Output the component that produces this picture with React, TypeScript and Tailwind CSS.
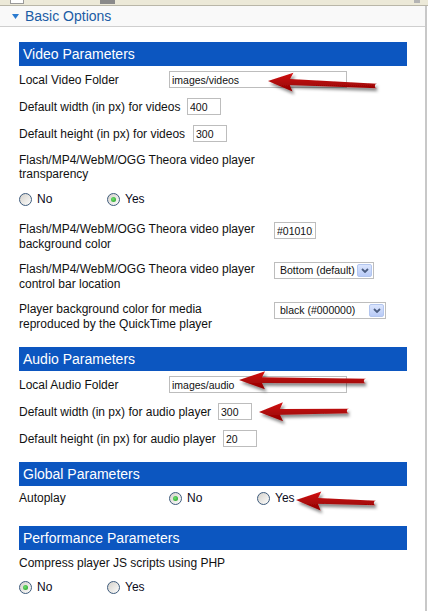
import React from "react";

const FONT = "font-['Liberation_Sans',Arial,sans-serif]";

function Bar({ children }: { children: React.ReactNode }) {
  return (
    <div className="h-[24px] w-[388px] bg-[#0c56c0] text-white text-[14px] leading-[24px] pl-[4px]">
      {children}
    </div>
  );
}

function TextBox({ value, w }: { value: string; w: string }) {
  return (
    <input
      readOnly
      value={value}
      className={`${w} h-[17px] border border-[#bdbdbd] bg-white text-[10.5px] leading-[15px] px-[2px] text-[#111] outline-none ${FONT}`}
    />
  );
}

function Radio({ checked }: { checked?: boolean }) {
  return (
    <span className="relative inline-block w-[13px] h-[13px] shrink-0 rounded-full border border-[#3e5b7c] bg-[linear-gradient(135deg,#d4d1cb,#fdfdfc)]">
      {checked && (
        <span className="absolute left-[3px] top-[3px] w-[5px] h-[5px] rounded-full bg-[radial-gradient(circle_at_40%_40%,#6fe06f,#1f9a1f)]" />
      )}
    </span>
  );
}

function RadioOpt({ label, checked }: { label: string; checked?: boolean }) {
  return (
    <span className="w-[88px] flex items-center gap-[5px]">
      <Radio checked={checked} />
      <span className="text-[12px] leading-[14px] text-[#0a0a1a]">{label}</span>
    </span>
  );
}

function Select({ value, w }: { value: string; w: string }) {
  return (
    <div
      className={`${w} h-[17px] flex items-center border border-[#bdbdbd] bg-white pl-[5px] pr-[1px] text-[10.5px] leading-[15px] text-[#111]`}
    >
      <span className="flex-1 whitespace-nowrap">{value}</span>
      <span className="w-[15px] h-[13px] shrink-0 rounded-[2px] border border-[#b3c6ef] bg-[linear-gradient(180deg,#dbe5fd,#b9cbf7)] flex items-center justify-center">
        <svg width="8" height="5" viewBox="0 0 8 5">
          <path d="M1 1 L4 4 L7 1" fill="none" stroke="#4b5d80" strokeWidth="1.8" />
        </svg>
      </span>
    </div>
  );
}

function arrowPath(tx: number, ty: number, ex: number, ey: number, hl: number, hh: number) {
  const L = Math.hypot(ex - tx, ey - ty);
  const dx = (ex - tx) / L;
  const dy = (ey - ty) / L;
  const nx = -dy;
  const ny = dx;
  const bx = tx + dx * hl;
  const by = ty + dy * hl;
  const s1 = 2.9;
  const s2 = 2.2;
  const p = (x: number, y: number) => `${x.toFixed(1)},${y.toFixed(1)}`;
  const c1 = p(bx + nx * hh + dx * 1, by + ny * hh + dy * 1);
  const c2 = p(bx - nx * hh + dx * 1, by - ny * hh + dy * 1);
  const j1 = p(bx + nx * s1 - dx * 2, by + ny * s1 - dy * 2);
  const j2 = p(bx - nx * s1 - dx * 2, by - ny * s1 - dy * 2);
  const e1 = p(ex + nx * s2, ey + ny * s2);
  const e2 = p(ex - nx * s2, ey - ny * s2);
  return `M${p(tx, ty)} L${c1} L${j1} L${e1} A${s2},${s2} 0 0 1 ${e2} L${j2} L${c2} Z`;
}

const arrows = [
  [268, 81, 377, 86, 24, 9.5],
  [239, 380, 366, 381, 25, 9],
  [259, 412, 349, 411, 23, 9.5],
  [296, 500, 376, 503, 24, 9.5],
];

function Arrows() {
  return (
    <svg className="absolute inset-0 pointer-events-none" width="428" height="611" viewBox="0 0 428 611">
      <defs>
        <filter id="sh" x="-20%" y="-50%" width="140%" height="200%">
          <feDropShadow dx="2" dy="3" stdDeviation="1.6" floodColor="#000" floodOpacity="0.45" />
        </filter>
        <linearGradient id="rg" x1="0" y1="0" x2="0" y2="1">
          <stop offset="0" stopColor="#d41414" />
          <stop offset="1" stopColor="#8e0000" />
        </linearGradient>
      </defs>
      {arrows.map((a, i) => (
        <path key={i} d={arrowPath(a[0], a[1], a[2], a[3], a[4], a[5])} fill="url(#rg)" filter="url(#sh)" />
      ))}
    </svg>
  );
}

export default function App() {
  const lbl = "text-[12px] leading-[14px] text-[#111]";
  const lbl2 = "text-[12px] leading-[15px] text-[#111]";
  return (
    <div className={`relative w-[428px] h-[611px] overflow-hidden bg-white ${FONT}`}>
      <div className="h-[6px] bg-[#ece9d8] border-b border-[#b9b6a8] flex items-start">
        <div className="ml-[10px] w-[14px] h-[4px] bg-white border border-t-0 border-[#9a9a9a]" />
        <div className="ml-[76px] w-[15px] h-[4px] bg-[#8a8a8a]" />
        <div className="ml-auto mr-[8px] w-[6px] h-[3px] bg-[#b4b4b4]" />
      </div>
      <div className="flex h-[605px]">
        <div className="w-[425px]">
          <div className="h-[21px] bg-[#f9f9f9] border-b border-[#cfcfcf] flex items-center pl-[12px]">
            <svg width="7" height="5" viewBox="0 0 7 5" className="mt-[1px]">
              <polygon points="0,0 7,0 3.5,5" fill="#2b7bd0" />
            </svg>
            <span className="ml-[6px] text-[14px] leading-[16px] text-[#1b5ca5]">Basic Options</span>
          </div>

          <div className="pl-[19px] pt-[15px]">
            <Bar>Video Parameters</Bar>
            <div className="mt-[5px] flex items-center h-[17px]">
              <span className={`w-[150px] ${lbl}`}>Local Video Folder</span>
              <TextBox value="images/videos" w="w-[178px]" />
            </div>
            <div className="mt-[10px] flex items-center h-[17px]">
              <span className={`w-[168px] ${lbl}`}>Default width (in px) for videos</span>
              <TextBox value="400" w="w-[34px]" />
            </div>
            <div className="mt-[10px] flex items-center h-[17px]">
              <span className={`w-[174px] ${lbl}`}>Default height (in px) for videos</span>
              <TextBox value="300" w="w-[34px]" />
            </div>
            <div className={`mt-[11px] w-[260px] ${lbl}`}>
              Flash/MP4/WebM/OGG Theora video player transparency
            </div>
            <div className="mt-[11px] flex items-center h-[14px]">
              <RadioOpt label="No" />
              <RadioOpt label="Yes" checked />
            </div>
            <div className="mt-[16px] flex items-start">
              <div className={`w-[255px] ${lbl2}`}>Flash/MP4/WebM/OGG Theora video player background color</div>
              <TextBox value="#010101" w="w-[42px]" />
            </div>
            <div className="mt-[10px] flex items-start">
              <div className={`w-[255px] ${lbl2}`}>Flash/MP4/WebM/OGG Theora video player control bar location</div>
              <Select value="Bottom (default)" w="w-[100px]" />
            </div>
            <div className="mt-[10px] flex items-start">
              <div className={`w-[255px] ${lbl2}`}>
                Player background color for media
                <br />
                reproduced by the QuickTime player
              </div>
              <Select value="black (#000000)" w="w-[112px]" />
            </div>

            <div className="mt-[15px]">
              <Bar>Audio Parameters</Bar>
            </div>
            <div className="mt-[5px] flex items-center h-[17px]">
              <span className={`w-[150px] ${lbl}`}>Local Audio Folder</span>
              <TextBox value="images/audio" w="w-[178px]" />
            </div>
            <div className="mt-[10px] flex items-center h-[17px]">
              <span className={`w-[199px] ${lbl}`}>Default width (in px) for audio player</span>
              <TextBox value="300" w="w-[34px]" />
            </div>
            <div className="mt-[10px] flex items-center h-[17px]">
              <span className={`w-[204px] ${lbl}`}>Default height (in px) for audio player</span>
              <TextBox value="20" w="w-[34px]" />
            </div>

            <div className="mt-[15px]">
              <Bar>Global Parameters</Bar>
            </div>
            <div className="mt-[5px] flex items-center h-[14px]">
              <span className={`w-[150px] ${lbl}`}>Autoplay</span>
              <RadioOpt label="No" checked />
              <RadioOpt label="Yes" />
            </div>

            <div className="mt-[21px]">
              <Bar>Performance Parameters</Bar>
            </div>
            <div className={`mt-[6px] ${lbl}`}>Compress player JS scripts using PHP</div>
            <div className="mt-[10px] flex items-center h-[14px]">
              <RadioOpt label="No" checked />
              <RadioOpt label="Yes" />
            </div>
          </div>
        </div>
        <div className="w-[2px] bg-[#c8c8c8]" />
        <div className="w-[1px] bg-white" />
      </div>
      <Arrows />
    </div>
  );
}
